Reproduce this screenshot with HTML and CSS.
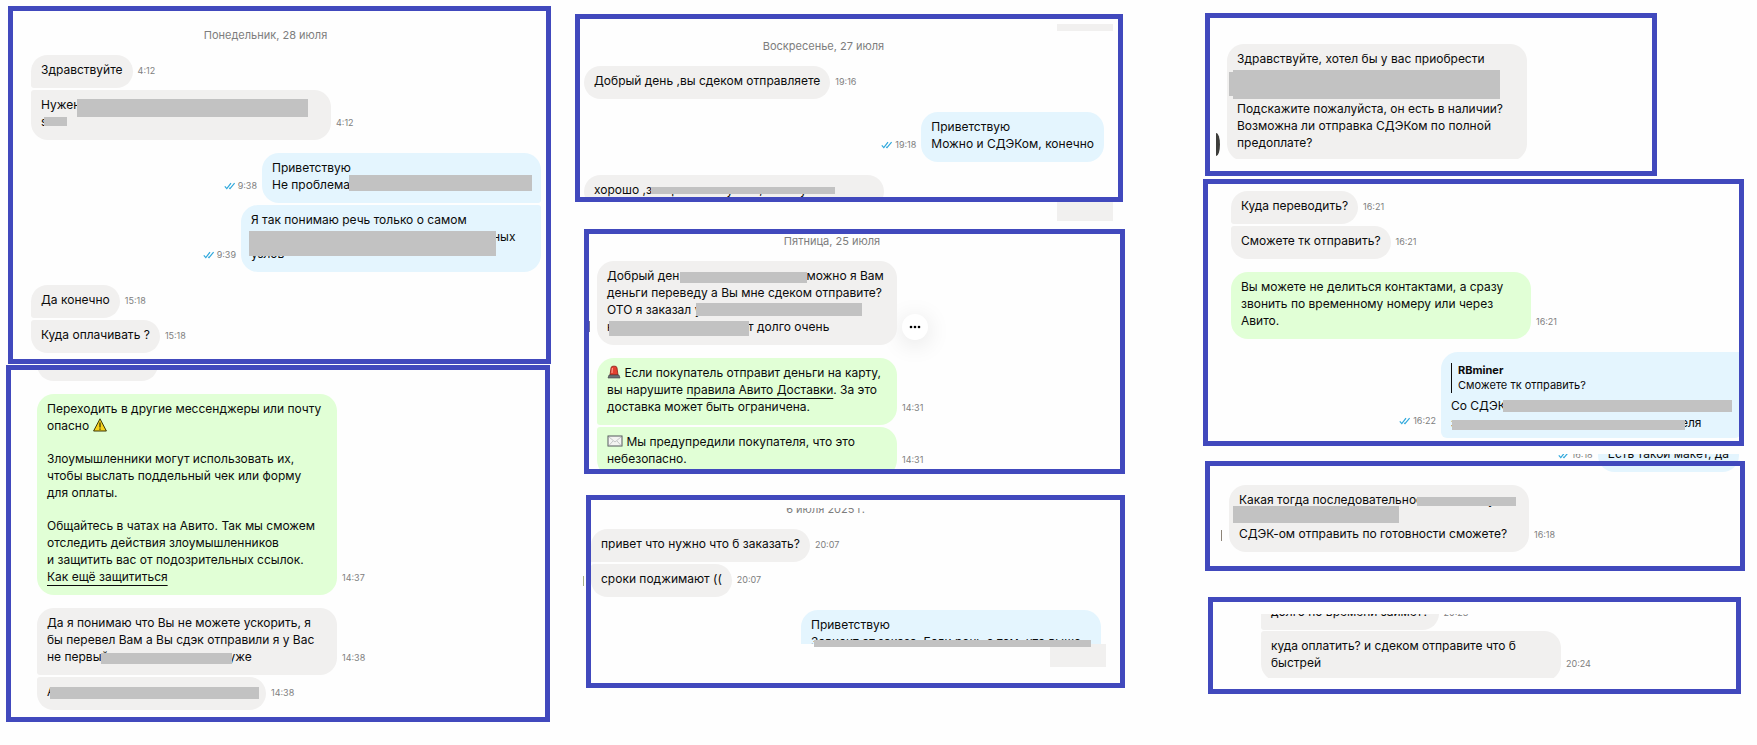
FILE: index.html
```
<!DOCTYPE html>
<html lang="ru">
<head>
    <meta charset="UTF-8">
    <meta name="viewport" content="width=device-width, initial-scale=1.0">
    <title>Переписка с покупателями</title>
    <link rel="stylesheet" href="styles.css">
</head>
<body>
    <svg class="symbols" aria-hidden="true">
        <symbol id="read" viewBox="0 0 12 8">
            <path d="M0.8 4.4 L2.8 6.6 L7 1.2 M5.2 5.8 L6 6.6 L10.6 1.2" fill="none" stroke="#2fa8dc" stroke-width="1.2"/>
        </symbol>
    </svg>

    <main class="board">
        <!-- Left column -->
        <div class="column">
            <section class="panel panel-monday">
                <div class="date">Понедельник, 28 июля</div>
                <div class="group">
                    <div class="row">
                        <div class="bubble first">Здравствуйте</div>
                        <time>4:12</time>
                    </div>
                    <div class="row">
                        <div class="bubble wide last">Нужен<br>s21+
                            <span class="mask mask-need"></span>
                            <span class="mask mask-model"></span>
                        </div>
                        <time>4:12</time>
                    </div>
                </div>
                <div class="group">
                    <div class="row out">
                        <time><svg class="read"><use href="#read"/></svg>9:38</time>
                        <div class="bubble medium first">Приветствую<br>Не проблема
                            <span class="mask mask-problem"></span>
                        </div>
                    </div>
                    <div class="row out">
                        <time><svg class="read"><use href="#read"/></svg>9:39</time>
                        <div class="bubble wide last">Я так понимаю речь только о самом<br><span class="space space-parts"></span>ных<br>узлов
                            <span class="mask mask-parts"></span>
                        </div>
                    </div>
                </div>
                <div class="group">
                    <div class="row">
                        <div class="bubble first">Да конечно</div>
                        <time>15:18</time>
                    </div>
                    <div class="row">
                        <div class="bubble last">Куда оплачивать ?</div>
                        <time>15:18</time>
                    </div>
                </div>
            </section>

            <section class="panel panel-safety">
                <div class="crop crop-top crop-stub">
                    <div class="row"><div class="bubble stub"></div></div>
                </div>
                <div class="group">
                    <div class="row">
                        <div class="bubble system wide">
                            <p>Переходить в другие мессенджеры или почту<br>опасно
                                <svg class="emoji" viewBox="0 0 14 14"><path d="M7 0.8 L13.4 13 H0.6 Z" fill="#f6d21c" stroke="#3b3608" stroke-width="1"/><path d="M7 4.6 V9.4 M7 10.4 V11.8" stroke="#3b3608" stroke-width="1.3"/></svg></p>
                            <p>Злоумышленники могут использовать их,<br>чтобы выслать поддельный чек или форму<br>для оплаты.</p>
                            <p>Общайтесь в чатах на Авито. Так мы сможем<br>отследить действия злоумышленников<br>и защитить вас от подозрительных ссылок.<br><a href="#">Как ещё защититься</a></p>
                        </div>
                        <time>14:37</time>
                    </div>
                </div>
                <div class="group">
                    <div class="row">
                        <div class="bubble wide first">Да я понимаю что Вы не можете ускорить, я<br>бы перевел Вам а Вы сдэк отправили я у Вас<br>не первый<span class="space space-again"></span>уже
                            <span class="mask mask-again"></span>
                        </div>
                        <time>14:38</time>
                    </div>
                    <div class="row">
                        <div class="bubble small last">А
                            <span class="mask mask-address"></span>
                        </div>
                        <time>14:38</time>
                    </div>
                </div>
            </section>
        </div>

        <!-- Middle column -->
        <div class="column">
            <section class="panel panel-sunday">
                <span class="patch patch-corner"></span>
                <div class="date">Воскресенье, 27 июля</div>
                <div class="group">
                    <div class="row">
                        <div class="bubble">Добрый день ,вы сдеком отправляете</div>
                        <time>19:16</time>
                    </div>
                </div>
                <div class="group">
                    <div class="row out">
                        <time><svg class="read"><use href="#read"/></svg>19:18</time>
                        <div class="bubble">Приветствую<br>Можно и СДЭКом, конечно</div>
                    </div>
                </div>
                <div class="crop crop-tomorrow">
                    <div class="row">
                        <div class="bubble wide">хорошо ,завтра напишу вам, мне нужен
                            <span class="mask mask-tomorrow"></span>
                        </div>
                    </div>
                </div>
            </section>
            <div class="patch patch-between"></div>

            <section class="panel panel-friday">
                <span class="avatar"></span>
                <div class="date">Пятница, 25 июля</div>
                <div class="group">
                    <div class="row">
                        <div class="bubble wide">Добрый ден<span class="space space-hello"></span>можно я Вам<br>деньги переведу а Вы мне сдеком отправите?<br>ОТО я заказал у<br>н<span class="space space-long"></span>т долго очень
                            <span class="mask mask-hello"></span>
                            <span class="mask mask-ordered"></span>
                            <span class="mask mask-long"></span>
                        </div>
                        <button class="more" type="button" aria-label="Ещё">
                            <svg viewBox="0 0 12 4"><circle cx="2" cy="2" r="1.3"/><circle cx="6" cy="2" r="1.3"/><circle cx="10" cy="2" r="1.3"/></svg>
                        </button>
                    </div>
                </div>
                <div class="group">
                    <div class="row">
                        <div class="bubble system wide first"><svg class="emoji" viewBox="0 0 14 14"><path d="M3 10 L4 3 Q4.3 1.2 6 1.2 H8 Q9.7 1.2 10 3 L11 10 Z" fill="#e2402f" stroke="#8c1c14" stroke-width="0.8"/><path d="M5.4 3 L5 8" stroke="#ff9c8c" stroke-width="1.2"/><path d="M1 13 L2 10 H12 L13 13 Z" fill="#6b6f74" stroke="#3c3f44" stroke-width="0.6"/></svg> Если покупатель отправит деньги на карту,<br>вы нарушите <a href="#">правила Авито Доставки</a>. За это<br>доставка может быть ограничена.</div>
                        <time>14:31</time>
                    </div>
                    <div class="crop crop-warned">
                        <div class="row">
                            <div class="bubble system wide last"><svg class="emoji envelope" viewBox="0 0 16 14"><rect x="1" y="2" width="14" height="10" fill="#f4f4f2" stroke="#55585c"/><path d="M2 3 L8 8 L14 3 M2 11.4 L6 7 M14 11.4 L10 7" fill="none" stroke="#b9bbbd" stroke-width="0.8"/></svg> Мы предупредили покупателя, что это<br>небезопасно.</div>
                            <time>14:31</time>
                        </div>
                    </div>
                </div>
            </section>

            <section class="panel panel-july">
                <span class="avatar"></span>
                <div class="crop crop-top crop-date">
                    <div class="date">6 июля 2025 г.</div>
                </div>
                <div class="group">
                    <div class="row">
                        <div class="bubble first">привет что нужно что б заказать?</div>
                        <time>20:07</time>
                    </div>
                    <div class="row">
                        <div class="bubble last">сроки поджимают ((</div>
                        <time>20:07</time>
                    </div>
                </div>
                <div class="depends">
                    <div class="crop crop-depends">
                        <div class="row out">
                            <div class="bubble wide">Приветствую<br>Зависит от заказа. Если речь о том, что выше</div>
                        </div>
                    </div>
                    <span class="mask mask-depends"></span>
                </div>
                <div class="patch patch-july"></div>
            </section>
        </div>

        <!-- Right column -->
        <div class="column column-right">
            <section class="panel panel-stock">
                <span class="avatar"></span>
                <div class="crop crop-stock">
                    <div class="row">
                        <div class="bubble wide">
                            <p>Здравствуйте, хотел бы у вас приобрести<br>&nbsp;</p>
                            <p>Подскажите пожалуйста, он есть в наличии?<br>Возможна ли отправка СДЭКом по полной<br>предоплате?</p>
                            <span class="mask mask-item"></span>
                            <span class="mask mask-item-edge"></span>
                        </div>
                    </div>
                </div>
            </section>

            <section class="panel panel-transfer">
                <div class="group">
                    <div class="row">
                        <div class="bubble first">Куда переводить?</div>
                        <time>16:21</time>
                    </div>
                    <div class="row">
                        <div class="bubble last">Сможете тк отправить?</div>
                        <time>16:21</time>
                    </div>
                </div>
                <div class="group">
                    <div class="row">
                        <div class="bubble system wide">Вы можете не делиться контактами, а сразу<br>звонить по временному номеру или через<br>Авито.</div>
                        <time>16:21</time>
                    </div>
                </div>
                <div class="group">
                    <div class="row out">
                        <time><svg class="read"><use href="#read"/></svg>16:22</time>
                        <div class="bubble wide reply">
                            <blockquote><b>RBminer</b><br>Сможете тк отправить?</blockquote>
                            Со СДЭК<br>з<span class="space space-maker"></span>еля
                            <span class="mask mask-cdek"></span>
                            <span class="mask mask-maker"></span>
                        </div>
                    </div>
                </div>
            </section>

            <div class="crop crop-top crop-layout">
                <div class="row out">
                    <time><svg class="read"><use href="#read"/></svg>16:18</time>
                    <div class="bubble">Есть такой макет, да</div>
                </div>
            </div>

            <section class="panel panel-order">
                <span class="avatar"></span>
                <div class="group">
                    <div class="row">
                        <div class="bubble wide">Какая тогда последовательность, вам какую<br>&nbsp;<br>СДЭК-ом отправить по готовности сможете?
                            <span class="mask mask-which"></span>
                            <span class="mask mask-send"></span>
                        </div>
                        <time>16:18</time>
                    </div>
                </div>
            </section>

            <section class="panel panel-pay">
                <div class="crop crop-top crop-time">
                    <div class="row">
                        <div class="bubble first">долго по времени займет?</div>
                        <time>20:23</time>
                    </div>
                </div>
                <div class="crop crop-pay">
                    <div class="row">
                        <div class="bubble wide last">куда оплатить? и сдеком отправите что б<br>быстрей</div>
                        <time>20:24</time>
                    </div>
                </div>
            </section>
        </div>
    </main>
</body>
</html>
```
FILE: styles.css
```
* {
    box-sizing: border-box;
}

body {
    margin: 0;
    background-color: #fefefe;
    color: #0b0b0b;
    font-family: Inter, "Liberation Sans", sans-serif;
    font-size: 12px;
    line-height: 17px;
}

p {
    margin: 0;
}

p + p {
    margin-top: 16px;
}

a {
    color: inherit;
    text-decoration: underline;
    text-underline-offset: 4px;
}

.symbols {
    display: none;
}

.board {
    display: grid;
    grid-template-columns: minmax(0, 545fr) minmax(0, 550fr) minmax(0, 596fr);
    column-gap: 24px;
    padding: 6px 12px 20px 6px;
}

.column {
    display: flex;
    flex-direction: column;
}

.column-right {
    padding-left: 54px;
}

/* Framed pieces of a chat */
.panel {
    position: relative;
    border: 5px solid #4149bd;
}

/* Messages */
.date {
    margin-bottom: 13px;
    color: #7d7d7d;
    font-size: 11px;
    line-height: 14px;
    text-align: center;
}

.group {
    display: flex;
    flex-direction: column;
    gap: 2px;
}

.group + .group,
.group + .crop,
.group + .depends {
    margin-top: 13px;
}

.row {
    display: flex;
    align-items: flex-end;
    gap: 5px;
}

.row.out {
    justify-content: flex-end;
}

.bubble {
    position: relative;
    flex: none;
    padding: 6px 10px 10px;
    border-radius: 17px;
    background-color: #f1f0ef;
    white-space: nowrap;
}

.bubble.small {
    width: 229px;
}

.bubble.medium {
    width: 279px;
}

.bubble.wide {
    width: 300px;
}

.bubble.stub {
    width: 121px;
    height: 33px;
}

.bubble.system {
    background-color: #e1ffd6;
}

.bubble.first {
    border-bottom-left-radius: 3px;
}

.bubble.last {
    border-top-left-radius: 3px;
}

.out .bubble {
    background-color: #e4f5fe;
}

.out .bubble.first {
    border-radius: 17px 17px 3px 17px;
}

.out .bubble.last {
    border-radius: 17px 3px 17px 17px;
}

.bubble.reply {
    margin-right: -2px;
    padding-bottom: 7px;
    border-radius: 17px 0 6px 6px;
}

blockquote {
    margin: 5px 0 4px;
    padding-left: 6px;
    border-left: 1px solid #0b0b0b;
    font-size: 11px;
    line-height: 15px;
}

time {
    flex: none;
    padding-bottom: 10px;
    color: #808080;
    font-size: 9px;
    line-height: 14px;
}

.read {
    width: 12px;
    height: 8px;
    margin-right: 2px;
    vertical-align: -1px;
}

.emoji {
    width: 14px;
    height: 14px;
    vertical-align: -2px;
}

.emoji.envelope {
    width: 16px;
}

.more {
    display: flex;
    align-items: center;
    justify-content: center;
    width: 26px;
    height: 26px;
    margin-bottom: 5px;
    padding: 0;
    border: none;
    border-radius: 50%;
    background-color: #fff;
    box-shadow: 0 4px 24px rgba(0, 0, 0, 0.12);
    cursor: pointer;
}

.more svg {
    width: 12px;
    height: 4px;
}

/* Messages cut off by the edge of a piece */
.crop {
    display: flex;
    flex-direction: column;
    overflow: hidden;
}

.crop-top {
    justify-content: flex-end;
}

.crop-stub { height: 11px; }
.crop-tomorrow { height: 22px; }
.crop-warned { height: 42px; }
.crop-depends { height: 34px; }
.crop-stock { height: 115px; }
.crop-time { height: 16px; }
.crop-pay { height: 47px; }

.crop-date {
    height: 8px;
    margin-bottom: 13px;
}

.crop-date .date {
    margin-bottom: 0;
}

.crop-layout {
    height: 18px;
    margin: 8px 6px -11px 0;
}

/* Grey bars that hide private text */
.mask {
    position: absolute;
    background-color: #c2c2c2;
}

.mask-need { left: 46px; top: 9px; width: 231px; height: 18px; }
.mask-model { left: 13px; top: 27px; width: 23px; height: 9px; }
.mask-problem { left: 87px; top: 22px; width: 183px; height: 16px; }
.mask-parts { left: 8px; top: 26px; width: 247px; height: 25px; }
.mask-again { left: 64px; top: 45px; width: 131px; height: 11px; }
.mask-address { left: 13px; top: 10px; width: 209px; height: 12px; }
.mask-tomorrow { left: 67px; top: 12px; width: 184px; height: 7px; }
.mask-hello { left: 83px; top: 11px; width: 127px; height: 11px; }
.mask-ordered { left: 99px; top: 42px; width: 166px; height: 13px; }
.mask-long { left: 12px; top: 60px; width: 140px; height: 15px; }
.mask-depends { right: 10px; top: 30px; width: 277px; height: 7px; }
.mask-item { left: 6px; top: 26px; width: 267px; height: 29px; }
.mask-item-edge { left: 2px; top: 28px; width: 4px; height: 24px; }
.mask-cdek { left: 62px; top: 48px; width: 229px; height: 12px; }
.mask-maker { left: 11px; top: 68px; width: 233px; height: 10px; }
.mask-which { left: 188px; top: 12px; width: 99px; height: 9px; }
.mask-send { left: 4px; top: 21px; width: 166px; height: 17px; }

/* Room left in a line under a bar */
.space {
    display: inline-block;
}

.space-parts { width: 242px; }
.space-again { width: 120px; }
.space-hello { width: 127px; }
.space-long { width: 134px; }
.space-maker { width: 224px; }

/* Light leftovers of the page behind */
.patch {
    width: 56px;
    background-color: #f1f0ef;
}

.patch-corner {
    position: absolute;
    top: 5px;
    right: 5px;
    height: 7px;
}

.patch-between {
    height: 19px;
    margin: 0 12px 8px auto;
}

.patch-july {
    height: 23px;
    margin: 0 -5px 16px auto;
}

/* Slivers of user pictures */
.avatar {
    position: absolute;
}

/* Panels */
.panel-monday {
    margin: 0 0 1px 2px;
    padding: 17px 5px 6px 18px;
}

.panel-monday .date {
    margin-right: 41px;
}

.panel-safety {
    margin-right: 1px;
    padding: 0 5px 7px 26px;
}

.panel-safety .crop {
    margin-bottom: 13px;
}

.panel-sunday {
    margin: 8px 2px 0 0;
    padding: 20px 14px 0 4px;
}

.panel-sunday .date {
    margin-right: 41px;
}

.panel-friday {
    margin-left: 9px;
    padding-left: 8px;
}

.panel-friday .date {
    margin-right: 53px;
}

.panel-friday .avatar {
    left: 0;
    top: 87px;
    width: 1px;
    height: 11px;
    background-color: #75759c;
}

.panel-july {
    margin: 21px 0 0 11px;
    padding: 8px 19px 0 0;
}

.panel-july .bubble.first {
    border-bottom-left-radius: 0;
}

.panel-july .crop-date {
    margin-right: 41px;
}

.panel-july .avatar {
    left: -8px;
    top: 76px;
    width: 1px;
    height: 10px;
    background-color: #a9b184;
}

.depends {
    position: relative;
    z-index: 1;
}

.panel-stock {
    margin: 7px 88px 0 2px;
    padding: 26px 5px 12px 17px;
}

.panel-stock .avatar {
    left: 6px;
    top: 115px;
    width: 4px;
    height: 23px;
    border-radius: 0 4px 4px 0 / 0 12px 12px 0;
    background-color: #3d3d3b;
}

.panel-transfer {
    margin: 3px 1px 0 0;
    padding: 7px 0 3px 23px;
    overflow: hidden;
}

.panel-order {
    margin-left: 2px;
    padding: 19px 5px 14px 19px;
}

.panel-order .avatar {
    left: 11px;
    top: 64px;
    width: 1px;
    height: 11px;
    background-color: #8d8478;
}

.panel-pay {
    margin: 26px 4px 0 5px;
    padding: 12px 5px 11px 48px;
}

.panel-pay .crop-time {
    margin-bottom: 1px;
}
```
